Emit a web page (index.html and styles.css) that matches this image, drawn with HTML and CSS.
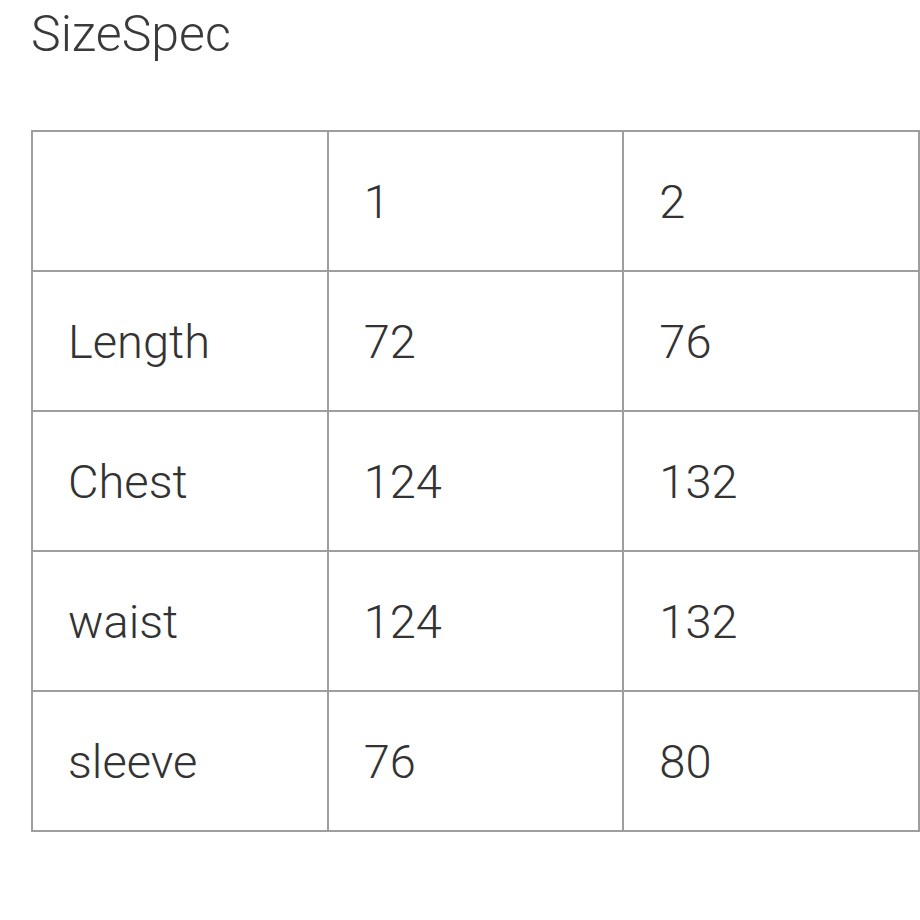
FILE: index.html
```html
<!DOCTYPE html>
<html>
<head>
<meta charset="utf-8">
<link rel="stylesheet" href="styles.css">
</head>
<body>
<div class="page">
  <h1 class="title">SizeSpec</h1>
  <table class="spec">
    <tr><td></td><td>1</td><td>2</td></tr>
    <tr><td>Length</td><td>72</td><td>76</td></tr>
    <tr><td>Chest</td><td>124</td><td>132</td></tr>
    <tr><td>waist</td><td>124</td><td>132</td></tr>
    <tr><td>sleeve</td><td>76</td><td>80</td></tr>
  </table>
</div>
</body>
</html>
```
FILE: styles.css
```css
html, body {
  margin: 0;
  padding: 0;
  background: #fff;
  overflow: hidden;
}
.page {
  padding-left: 31px;
  font-family: Roboto, "Liberation Sans", sans-serif;
  font-weight: 300;
  color: #333;
}
.title {
  margin: 7px 0 68px 0;
  font-size: 50px;
  line-height: 55px;
  font-weight: 300;
  color: #3a3a3a;
}
.spec {
  border-collapse: collapse;
  table-layout: fixed;
  width: 889px;
  font-size: 47px;
}
.spec td {
  border: 2px solid #9e9e9e;
  height: 140px;
  padding: 0 0 0 35px;
  vertical-align: middle;
  box-sizing: border-box;
}
```
